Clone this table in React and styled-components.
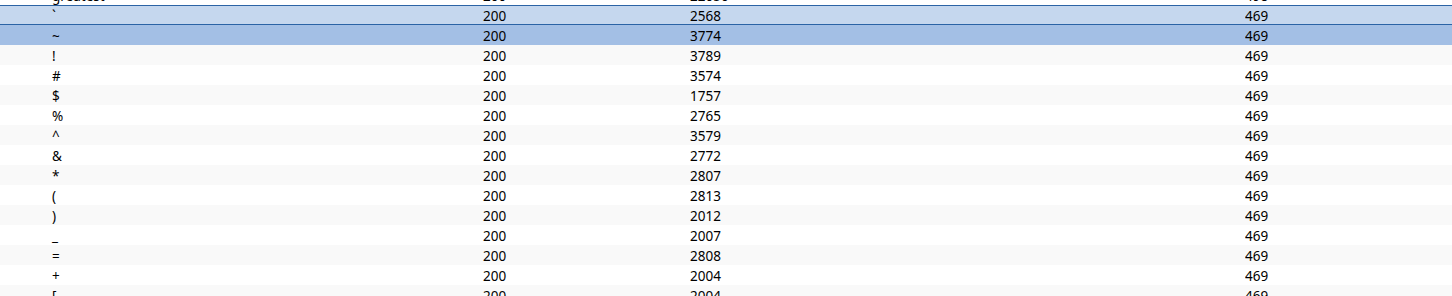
import React from "react";
import styled, { createGlobalStyle } from "styled-components";

const GlobalStyle = createGlobalStyle`
  html, body {
    margin: 0;
    padding: 0;
    background: #ffffff;
    overflow: hidden;
  }
`;

const rows = [
  { key: "greatest", count: 200, total: 22050, max: 498 },
  { key: "`", count: 200, total: 2568, max: 469, state: "focused" },
  { key: "~", count: 200, total: 3774, max: 469, state: "selected" },
  { key: "!", count: 200, total: 3789, max: 469 },
  { key: "#", count: 200, total: 3574, max: 469 },
  { key: "$", count: 200, total: 1757, max: 469 },
  { key: "%", count: 200, total: 2765, max: 469 },
  { key: "^", count: 200, total: 3579, max: 469 },
  { key: "&", count: 200, total: 2772, max: 469 },
  { key: "*", count: 200, total: 2807, max: 469 },
  { key: "(", count: 200, total: 2813, max: 469 },
  { key: ")", count: 200, total: 2012, max: 469 },
  { key: "_", count: 200, total: 2007, max: 469 },
  { key: "=", count: 200, total: 2808, max: 469 },
  { key: "+", count: 200, total: 2004, max: 469 },
  { key: "[", count: 200, total: 2004, max: 469 },
];

const Table = styled.div`
  margin-top: -15px;
  width: 1452px;
  font-family: "Noto Sans", "Open Sans", sans-serif;
  font-size: 13.5px;
  color: #000000;
`;

const rowBackground = ({ $state, $odd }) => {
  if ($state === "selected") return "#a3bfe5";
  if ($state === "focused") return "#c5d7ee";
  return $odd ? "#f9f9f9" : "#ffffff";
};

const Row = styled.div`
  display: grid;
  grid-template-columns: 483px 207px 555px 1fr;
  height: 20px;
  box-sizing: border-box;
  align-items: center;
  background: ${rowBackground};
  border-top: 1px solid ${({ $state }) => ($state === "focused" ? "#2b63a5" : "transparent")};
  border-bottom: 1px solid ${({ $state }) => ($state === "focused" ? "#2b63a5" : "transparent")};
  line-height: 18px;
`;

const Cell = styled.div`
  padding-left: ${({ $first }) => ($first ? "52px" : "0")};
  padding-top: 2px;
  white-space: nowrap;
  overflow: hidden;
`;

export default function App() {
  return (
    <>
      <GlobalStyle />
      <Table>
        {rows.map((r, i) => (
          <Row key={i} $state={r.state} $odd={i % 2 === 1}>
            <Cell $first>{r.key}</Cell>
            <Cell>{r.count}</Cell>
            <Cell>{r.total}</Cell>
            <Cell>{r.max}</Cell>
          </Row>
        ))}
      </Table>
    </>
  );
}
